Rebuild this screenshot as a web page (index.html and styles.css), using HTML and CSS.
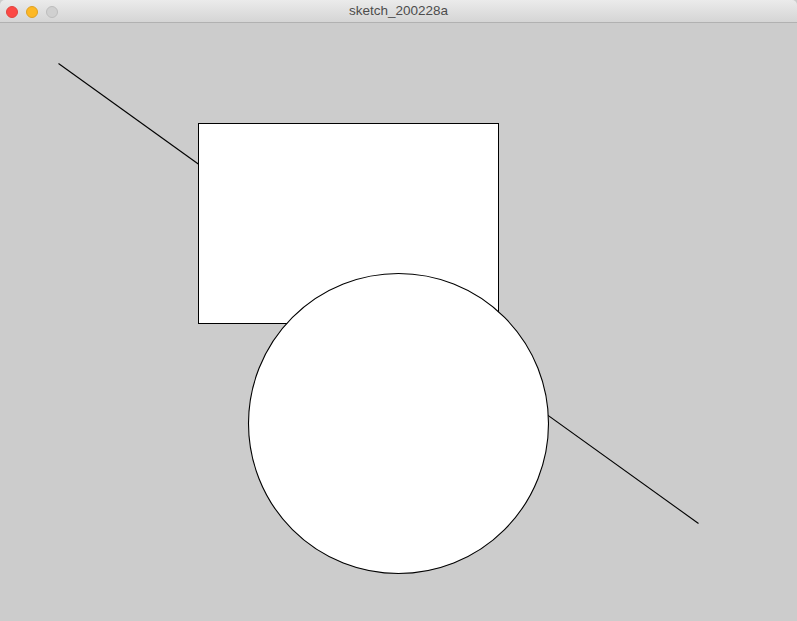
FILE: index.html
```html
<!DOCTYPE html>
<html>
<head>
<meta charset="utf-8">
<link rel="stylesheet" href="styles.css">
</head>
<body>
<div class="window">
  <div class="titlebar">
    <div class="lights">
      <span class="light red"></span>
      <span class="light yellow"></span>
      <span class="light gray"></span>
    </div>
    <div class="title">sketch_200228a</div>
  </div>
  <div class="canvas">
    <svg class="sketch" width="797" height="598" viewBox="0 0 797 598">
      <line x1="58.5" y1="40.5" x2="698.5" y2="500.5" stroke="#000" stroke-width="1.1"/>
      <rect x="198.5" y="100.5" width="300" height="200" fill="#fff" stroke="#000" stroke-width="1"/>
      <circle cx="398.5" cy="400.5" r="150" fill="#fff" stroke="#000" stroke-width="1.1"/>
    </svg>
  </div>
</div>
</body>
</html>
```
FILE: styles.css
```css
html, body {
  margin: 0;
  padding: 0;
  width: 797px;
  height: 621px;
  overflow: hidden;
  background: #cccccc;
}
.window {
  width: 797px;
  height: 621px;
  display: flex;
  flex-direction: column;
}
.titlebar {
  height: 22px;
  flex: none;
  display: flex;
  align-items: center;
  justify-content: center;
  position: relative;
  background: linear-gradient(#ebebeb, #d5d5d5);
  border-bottom: 1px solid #b1b1b1;
  border-top-right-radius: 5px;
  border-top-left-radius: 5px;
}
.lights {
  position: absolute;
  left: 6px;
  top: 6px;
  display: flex;
  gap: 8px;
}
.light {
  width: 12px;
  height: 12px;
  border-radius: 50%;
  box-sizing: border-box;
}
.red { background: #fc4945; border: 1px solid #e0443e; }
.yellow { background: #fdb825; border: 1px solid #dea123; }
.gray { background: #d0d0d0; border: 1px solid #bdbdbd; }
.title {
  font-family: "Helvetica Neue", "Liberation Sans", "DejaVu Sans", sans-serif;
  font-size: 13.5px;
  color: #4d4d4d;
  line-height: 22px;
}
.canvas {
  flex: 1;
  background: #cccccc;
}
.sketch {
  display: block;
}
```
